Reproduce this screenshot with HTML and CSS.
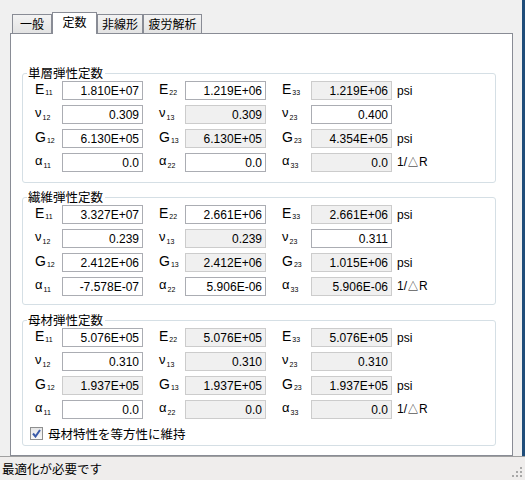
FILE: index.html
```html
<!DOCTYPE html>
<html lang="ja">
<head>
<meta charset="utf-8">
<link rel="stylesheet" href="styles.css">
</head>
<body>
<div class="window">
  <div class="client">
    <div class="tabs">
      <div class="tab t1">一般</div>
      <div class="tab t2 sel">定数</div>
      <div class="tab t3">非線形</div>
      <div class="tab t4">疲労解析</div>
    </div>
    <div class="panel">
      <div class="group g1">
        <div class="gtitle">単層弾性定数</div>
        <div class="grid">
          <span class="sym">E<sub>11</sub></span><input class="fld" value="1.810E+07" readonly>
          <span class="sym s2">E<sub>22</sub></span><input class="fld" value="1.219E+06" readonly>
          <span class="sym s2">E<sub>33</sub></span><input class="fld dis" value="1.219E+06" readonly>
          <span class="unit">psi</span>

          <span class="sym nu">ν<sub>12</sub></span><input class="fld" value="0.309" readonly>
          <span class="sym s2 nu">ν<sub>13</sub></span><input class="fld dis" value="0.309" readonly>
          <span class="sym s2 nu">ν<sub>23</sub></span><input class="fld" value="0.400" readonly>
          <span class="unit"></span>

          <span class="sym">G<sub>12</sub></span><input class="fld" value="6.130E+05" readonly>
          <span class="sym s2">G<sub>13</sub></span><input class="fld dis" value="6.130E+05" readonly>
          <span class="sym s2">G<sub>23</sub></span><input class="fld dis" value="4.354E+05" readonly>
          <span class="unit">psi</span>

          <span class="sym al">α<sub>11</sub></span><input class="fld" value="0.0" readonly>
          <span class="sym s2 al">α<sub>22</sub></span><input class="fld" value="0.0" readonly>
          <span class="sym s2 al">α<sub>33</sub></span><input class="fld dis" value="0.0" readonly>
          <span class="unit">1/△R</span>
        </div>
      </div>

      <div class="group g2">
        <div class="gtitle">繊維弾性定数</div>
        <div class="grid">
          <span class="sym">E<sub>11</sub></span><input class="fld" value="3.327E+07" readonly>
          <span class="sym s2">E<sub>22</sub></span><input class="fld" value="2.661E+06" readonly>
          <span class="sym s2">E<sub>33</sub></span><input class="fld dis" value="2.661E+06" readonly>
          <span class="unit">psi</span>

          <span class="sym nu">ν<sub>12</sub></span><input class="fld" value="0.239" readonly>
          <span class="sym s2 nu">ν<sub>13</sub></span><input class="fld dis" value="0.239" readonly>
          <span class="sym s2 nu">ν<sub>23</sub></span><input class="fld" value="0.311" readonly>
          <span class="unit"></span>

          <span class="sym">G<sub>12</sub></span><input class="fld" value="2.412E+06" readonly>
          <span class="sym s2">G<sub>13</sub></span><input class="fld dis" value="2.412E+06" readonly>
          <span class="sym s2">G<sub>23</sub></span><input class="fld dis" value="1.015E+06" readonly>
          <span class="unit">psi</span>

          <span class="sym al">α<sub>11</sub></span><input class="fld" value="-7.578E-07" readonly>
          <span class="sym s2 al">α<sub>22</sub></span><input class="fld" value="5.906E-06" readonly>
          <span class="sym s2 al">α<sub>33</sub></span><input class="fld dis" value="5.906E-06" readonly>
          <span class="unit">1/△R</span>
        </div>
      </div>

      <div class="group g3">
        <div class="gtitle">母材弾性定数</div>
        <div class="grid">
          <span class="sym">E<sub>11</sub></span><input class="fld" value="5.076E+05" readonly>
          <span class="sym s2">E<sub>22</sub></span><input class="fld dis" value="5.076E+05" readonly>
          <span class="sym s2">E<sub>33</sub></span><input class="fld dis" value="5.076E+05" readonly>
          <span class="unit">psi</span>

          <span class="sym nu">ν<sub>12</sub></span><input class="fld" value="0.310" readonly>
          <span class="sym s2 nu">ν<sub>13</sub></span><input class="fld dis" value="0.310" readonly>
          <span class="sym s2 nu">ν<sub>23</sub></span><input class="fld dis" value="0.310" readonly>
          <span class="unit"></span>

          <span class="sym">G<sub>12</sub></span><input class="fld dis" value="1.937E+05" readonly>
          <span class="sym s2">G<sub>13</sub></span><input class="fld dis" value="1.937E+05" readonly>
          <span class="sym s2">G<sub>23</sub></span><input class="fld dis" value="1.937E+05" readonly>
          <span class="unit">psi</span>

          <span class="sym al">α<sub>11</sub></span><input class="fld" value="0.0" readonly>
          <span class="sym s2 al">α<sub>22</sub></span><input class="fld dis" value="0.0" readonly>
          <span class="sym s2 al">α<sub>33</sub></span><input class="fld dis" value="0.0" readonly>
          <span class="unit">1/△R</span>
        </div>
        <label class="check">
          <span class="box"><svg width="9" height="9" viewBox="0 0 9 9"><path d="M1 4.5 L3.5 7.5 L8 1" fill="none" stroke="#3a5aa8" stroke-width="2"/></svg></span>
          <span>母材特性を等方性に維持</span>
        </label>
      </div>
    </div>
  </div>
  <div class="status">
    <span class="stext">最適化が必要です</span>
    <svg class="grip" width="12" height="12" viewBox="0 0 12 12">
      <rect x="9" y="1" width="2" height="2" fill="#a8a8a8"/>
      <rect x="9" y="5" width="2" height="2" fill="#a8a8a8"/>
      <rect x="5" y="5" width="2" height="2" fill="#a8a8a8"/>
      <rect x="9" y="9" width="2" height="2" fill="#a8a8a8"/>
      <rect x="5" y="9" width="2" height="2" fill="#a8a8a8"/>
      <rect x="1" y="9" width="2" height="2" fill="#a8a8a8"/>
    </svg>
  </div>
</div>
</body>
</html>
```

FILE: styles.css
```css
html, body {
  margin: 0;
  padding: 0;
}
body {
  background: #f0f0f0;
  font-family: "Noto Sans CJK JP", "Liberation Sans", sans-serif;
  font-size: 12px;
  color: #000;
}
.window {
  width: 525px;
  height: 480px;
  display: flex;
  flex-direction: column;
  overflow: hidden;
}
.client {
  box-sizing: border-box;
  width: 525px;
  height: 456px;
  padding: 12px 0 0 10px;
  border-right: 3px solid #1f4d7a;
}
.tabs {
  display: flex;
  height: 21px;
  padding-left: 2px;
  align-items: flex-start;
}
.tab {
  box-sizing: border-box;
  height: 19px;
  margin-top: 2px;
  border: 1px solid #898c95;
  border-bottom: none;
  background: linear-gradient(#f3f3f3, #e3e3e3);
  text-align: center;
  line-height: 17px;
  font-size: 12px;
}
.t1 { width: 40px; }
.t2 { width: 45px; }
.t3 { width: 46px; }
.t4 { width: 59px; }
.tab.sel {
  height: 22px;
  margin-top: 0;
  background: #fff;
  position: relative;
  z-index: 2;
  line-height: 18px;
}
.panel {
  box-sizing: border-box;
  width: 503px;
  height: 423px;
  border: 1px solid #898c95;
  background: #fff;
  padding-top: 39px;
  position: relative;
  z-index: 1;
}
.group {
  margin: 0 16px 0 11px;
  border: 1px solid #d5dfe5;
  border-radius: 3px;
  padding: 0 0 10px 10px;
}
.g2 { margin-top: 14px; padding-bottom: 8px; }
.g3 { margin-top: 15px; padding-bottom: 5px; }
.gtitle {
  display: table;
  margin: -8px 0 0 -6px;
  padding: 0 2px 0 1px;
  background: #fff;
  line-height: 14px;
  height: 14px;
  font-size: 12.5px;
}
.grid {
  margin-top: 1px;
  display: grid;
  grid-template-columns: 29px 81px 42px 81px 45px 81px auto;
  grid-auto-rows: 19px;
  row-gap: 5px;
  align-items: center;
}
.sym {
  font-family: "Liberation Sans", sans-serif;
  font-size: 14px;
  line-height: 19px;
  padding-left: 2px;
  white-space: nowrap;
}
.sym.s2 { padding-left: 16px; }
.sym sub {
  font-size: 7px;
  vertical-align: -1px;
  margin-left: 1px;
}
.sym.nu, .sym.al {
  font-size: 13px;
}
.sym.nu sub, .sym.al sub {
  vertical-align: -3px;
}
.fld {
  box-sizing: border-box;
  width: 81px;
  height: 19px;
  margin: 0;
  border: 1px solid #abadb3;
  background: #fff;
  padding: 0 3px 0 2px;
  text-align: right;
  font-family: "Liberation Sans", sans-serif;
  font-size: 12px;
  color: #000;
  outline: none;
}
.fld.dis {
  background: #f0f0f0;
  border-color: #cccccc;
}
.unit {
  padding-left: 5px;
  font-family: "Liberation Sans", sans-serif;
  font-size: 12px;
  white-space: nowrap;
}
.check {
  display: flex;
  align-items: center;
  gap: 5px;
  margin-top: 8px;
  margin-left: -3px;
  height: 13px;
  font-size: 12.5px;
}
.box {
  box-sizing: border-box;
  width: 13px;
  height: 13px;
  border: 1px solid #8e8f8f;
  background: linear-gradient(#e6e6e6, #f8f8f8);
  display: flex;
  align-items: center;
  justify-content: center;
}
.status {
  box-sizing: border-box;
  height: 24px;
  border-top: 1px solid #a0a0a0;
  background: #efedec;
  display: flex;
  align-items: center;
  justify-content: space-between;
  padding: 0 2px 0 2px;
}
.stext {
  font-size: 12.5px;
  line-height: 16px;
}
.grip {
  align-self: flex-end;
  margin-bottom: 2px;
}
```
